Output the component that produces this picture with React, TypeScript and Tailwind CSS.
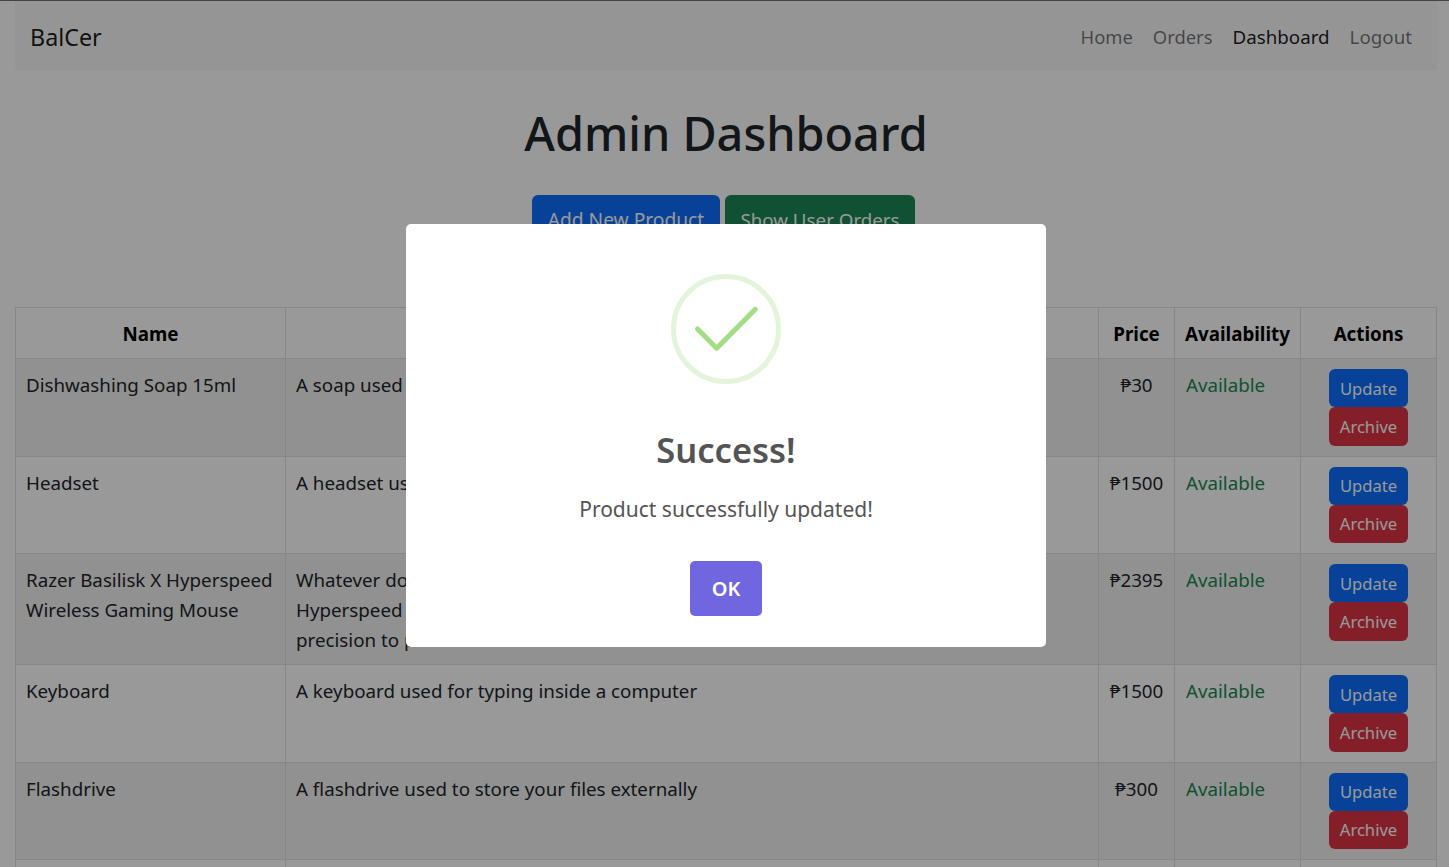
import React from "react";

const products = [
  { name: "Dishwashing Soap 15ml", desc: "A soap used for washing the dishes", price: "₱30", rowClass: "bg-black/5" },
  { name: "Headset", desc: "A headset used for listening to music", price: "₱1500", rowClass: "" },
  {
    name: "Razer Basilisk X Hyperspeed Wireless Gaming Mouse",
    desc: "Whatever double-click you need, the Razer Basilisk X\nHyperspeed gives you the speed and the pinpoint\nprecision to perform.",
    price: "₱2395",
    rowClass: "bg-black/5",
  },
  { name: "Keyboard", desc: "A keyboard used for typing inside a computer", price: "₱1500", rowClass: "" },
  { name: "Flashdrive", desc: "A flashdrive used to store your files externally", price: "₱300", rowClass: "bg-black/5" },
  { name: "", desc: "", price: "", rowClass: "h-[98px]" },
];

const cell = "border border-[#dee2e6] px-[10px] pb-[9px] pt-[11px] align-top";

const App = () => {
  return (
    <div className="h-screen overflow-hidden border-t border-[#717171] bg-white pl-[15px] pr-[12px] font-['Noto_Sans',sans-serif] text-[18.75px] leading-[30px] text-[#212529]">
      {/* navbar */}
      <nav className="flex h-[69px] items-center justify-between bg-[#f8f9fa] px-[15px] pt-[2px]">
        <span className="text-[23.3px] text-black/90">BalCer</span>
        <div className="flex gap-[20px] pr-[10px]">
          <span className="text-[18.4px] text-black/55">Home</span>
          <span className="text-[18.4px] text-black/55">Orders</span>
          <span className="text-black/90">Dashboard</span>
          <span className="text-black/55">Logout</span>
        </div>
      </nav>

      <h1 className="mt-[27px] text-center text-[46.8px] font-medium leading-[72px]">Admin Dashboard</h1>

      <div className="mt-[26px] flex justify-center gap-[5px] pr-[5px]">
        <button className="h-[48px] w-[188px] rounded-[6px] bg-[#0d6efd] pt-[2px] text-[19.2px] text-white">Add New Product</button>
        <button className="h-[48px] w-[190px] rounded-[6px] bg-[#198754] pt-[2px] text-white">Show User Orders</button>
      </div>

      {/* products */}
      <table className="mt-[64px] w-full table-fixed border-collapse">
        <colgroup>
          <col className="w-[270px]" />
          <col />
          <col className="w-[76px]" />
          <col className="w-[126px]" />
          <col className="w-[136px]" />
        </colgroup>
        <thead>
          <tr className="h-[51px] text-center text-black">
            <th className={cell}>Name</th>
            <th className={cell}>Description</th>
            <th className={cell}>Price</th>
            <th className={cell}>Availability</th>
            <th className={cell}>Actions</th>
          </tr>
        </thead>
        <tbody>
          {products.map((p, i) => (
            <tr key={i} className={p.rowClass}>
              <td className={cell}>{p.name}</td>
              <td className={`${cell} whitespace-pre-line`}>{p.desc}</td>
              <td className={`${cell} text-center`}>{p.price}</td>
              <td className="border border-[#dee2e6] pb-[9px] pl-[11px] pr-[9px] pt-[11px] align-top text-[#198754]">{p.name && "Available"}</td>
              <td className="border border-[#dee2e6] px-[10px] py-[10px] align-top">
                {p.name && (
                  <div className="flex flex-col items-center">
                    <button className="h-[38.25px] w-[79px] rounded-[6px] bg-[#0d6efd] text-[16.6px] leading-[27px] text-white">Update</button>
                    <button className="h-[38.25px] w-[79px] rounded-[6px] bg-[#dc3545] text-[16.6px] leading-[27px] text-white">Archive</button>
                  </div>
                )}
              </td>
            </tr>
          ))}
        </tbody>
      </table>

      {/* success dialog */}
      <div className="fixed inset-0 flex items-center justify-center bg-black/40 pl-[3px] pt-[4px]">
        <div className="flex h-[423px] w-[640px] flex-col items-center rounded-[5px] bg-white">
          <svg width="110" height="110" viewBox="0 0 110 110" className="mt-[50px]">
            <circle cx="55" cy="55" r="52.5" fill="none" stroke="#a5dc86" strokeOpacity="0.3" strokeWidth="5" />
            <path d="M26.5 55 L45.7 74.3 L84.3 35.3" fill="none" stroke="#a5dc86" strokeWidth="5" strokeLinecap="round" strokeLinejoin="round" />
          </svg>
          <h2 className="mt-[43px] text-[34.5px] font-semibold leading-[46px] text-[#545454]">Success!</h2>
          <p className="mt-[20px] text-[21px] leading-[33px] text-[#545454]">Product successfully updated!</p>
          <button className="mt-[35px] h-[55px] w-[72px] rounded-[5px] bg-[#7066e0] pt-px text-[20px] font-semibold text-white">OK</button>
        </div>
      </div>
    </div>
  );
};

export default App;
